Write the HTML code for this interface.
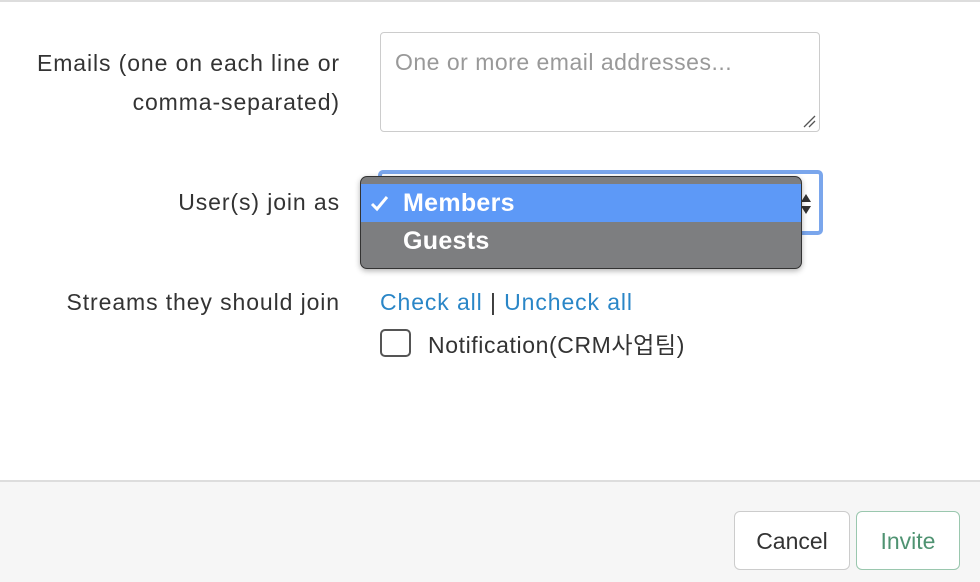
<!DOCTYPE html>
<html><head><style>
*{box-sizing:border-box;margin:0;padding:0}
body{width:980px;height:582px;background:#fff;font-family:"Liberation Sans","Noto Sans CJK KR",sans-serif;color:#333;position:relative;overflow:hidden;font-size:23px;letter-spacing:0.9px}
.a{position:absolute;white-space:nowrap}
.lbl{text-align:right;right:640px}
</style></head><body>
<div class="a" style="left:0;top:0;width:980px;height:2px;background:#ddd"></div>
<div class="a lbl" style="top:44px;line-height:39px;font-size:23px">Emails (one on each line or<br>comma-separated)</div>
<div class="a" style="left:380px;top:32px;width:440px;height:100px;border:1px solid #ccc;border-radius:4px"></div>
<div class="a" style="left:395px;top:49px;color:#999;letter-spacing:0.5px">One or more email addresses...</div>
<svg class="a" style="left:801px;top:113px" width="16" height="16"><path d="M3 14L14 3M8 14L14 8" stroke="#555" stroke-width="1.3"/></svg>
<div class="a lbl" style="top:189px">User(s) join as</div>
<div class="a" style="left:378px;top:170px;width:445px;height:65px;border:4px solid #7aa6ec;border-radius:5px;background:#fff"></div>
<svg class="a" style="left:799px;top:190px" width="14" height="30"><path d="M2 12L7 4L12 12ZM2 16L7 24L12 16Z" fill="#333"/></svg>
<div class="a" style="left:360px;top:176px;width:442px;height:93px;background:#7d7e80;border:1px solid #333;border-radius:7px;box-shadow:0 2px 6px rgba(0,0,0,.3)"></div>
<div class="a" style="left:361px;top:184px;width:440px;height:38px;background:#5d99f7"></div>
<svg class="a" style="left:370px;top:194px" width="20" height="20"><path d="M2 10L7 15L17 3" stroke="#fff" stroke-width="3" fill="none"/></svg>
<div class="a" style="left:403px;top:189px;color:#fff;font-size:25px;font-weight:bold;letter-spacing:0.3px">Members</div>
<div class="a" style="left:403px;top:227px;color:#fff;font-size:25px;font-weight:bold;letter-spacing:0.3px">Guests</div>
<div class="a lbl" style="top:289px">Streams they should join</div>
<div class="a" style="left:380px;top:289px;color:#2a86c7">Check all <span style="color:#333">|</span> Uncheck all</div>
<div class="a" style="left:380px;top:329px;width:31px;height:28px;border:2px solid #555;border-radius:5px"></div>
<div class="a" style="left:428px;top:326px;letter-spacing:0.6px">Notification(CRM사업팀)</div>
<div class="a" style="left:0;top:480px;width:980px;height:102px;background:#f6f6f6;border-top:2px solid #ddd"></div>
<div class="a" style="left:734px;top:511px;width:116px;height:59px;background:#fff;border:1px solid #ccc;border-radius:6px;text-align:center;line-height:59px;letter-spacing:0">Cancel</div>
<div class="a" style="left:856px;top:511px;width:104px;height:59px;background:#fff;border:1px solid #9ac7ae;border-radius:6px;text-align:center;line-height:59px;color:#4f9372;letter-spacing:0">Invite</div>
</body></html>
